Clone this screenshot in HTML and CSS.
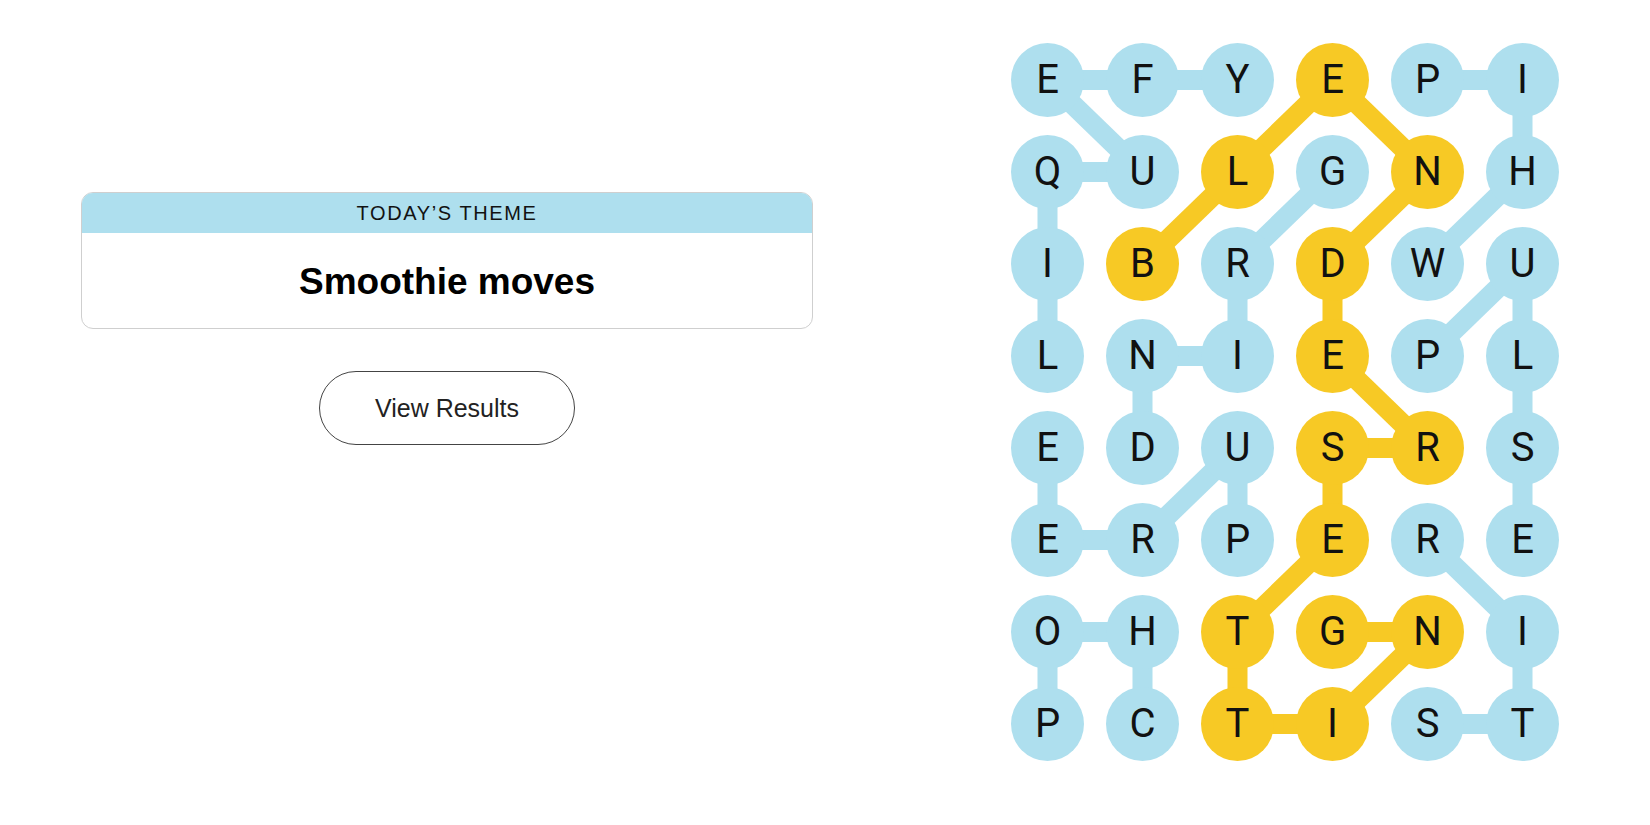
FILE: index.html
```html
<!DOCTYPE html>
<html lang="en">
<head>
<meta charset="utf-8">
<title>Strands</title>
<link rel="stylesheet" href="styles.css">
</head>
<body>
<div class="page">
  <section class="left">
    <div class="theme-card">
      <div class="theme-head">TODAY’S THEME</div>
      <div class="theme-body">Smoothie moves</div>
    </div>
    <button class="results-btn" type="button">View Results</button>
  </section>
  <section class="right">
    <div class="board">
      <svg class="links" width="570" height="736" viewBox="0 0 570 736" aria-hidden="true">
        <g class="blue-links">
          <!-- LIQUEFY -->
          <line x1="47.5" y1="322" x2="47.5" y2="230"/>
          <line x1="47.5" y1="230" x2="47.5" y2="138"/>
          <line x1="47.5" y1="138" x2="142.5" y2="138"/>
          <line x1="142.5" y1="138" x2="47.5" y2="46"/>
          <line x1="47.5" y1="46" x2="142.5" y2="46"/>
          <line x1="142.5" y1="46" x2="237.5" y2="46"/>
          <!-- WHIP -->
          <line x1="427.5" y1="230" x2="522.5" y2="138"/>
          <line x1="522.5" y1="138" x2="522.5" y2="46"/>
          <line x1="522.5" y1="46" x2="427.5" y2="46"/>
          <!-- GRIND -->
          <line x1="332.5" y1="138" x2="237.5" y2="230"/>
          <line x1="237.5" y1="230" x2="237.5" y2="322"/>
          <line x1="237.5" y1="322" x2="142.5" y2="322"/>
          <line x1="142.5" y1="322" x2="142.5" y2="414"/>
          <!-- PULSE -->
          <line x1="427.5" y1="322" x2="522.5" y2="230"/>
          <line x1="522.5" y1="230" x2="522.5" y2="322"/>
          <line x1="522.5" y1="322" x2="522.5" y2="414"/>
          <line x1="522.5" y1="414" x2="522.5" y2="506"/>
          <!-- PUREE -->
          <line x1="237.5" y1="506" x2="237.5" y2="414"/>
          <line x1="237.5" y1="414" x2="142.5" y2="506"/>
          <line x1="142.5" y1="506" x2="47.5" y2="506"/>
          <line x1="47.5" y1="506" x2="47.5" y2="414"/>
          <!-- CHOP -->
          <line x1="142.5" y1="690" x2="142.5" y2="598"/>
          <line x1="142.5" y1="598" x2="47.5" y2="598"/>
          <line x1="47.5" y1="598" x2="47.5" y2="690"/>
          <!-- STIR -->
          <line x1="427.5" y1="690" x2="522.5" y2="690"/>
          <line x1="522.5" y1="690" x2="522.5" y2="598"/>
          <line x1="522.5" y1="598" x2="427.5" y2="506"/>
        </g>
        <g class="gold-links">
          <line x1="142.5" y1="230" x2="237.5" y2="138"/>
          <line x1="237.5" y1="138" x2="332.5" y2="46"/>
          <line x1="332.5" y1="46" x2="427.5" y2="138"/>
          <line x1="427.5" y1="138" x2="332.5" y2="230"/>
          <line x1="332.5" y1="230" x2="332.5" y2="322"/>
          <line x1="332.5" y1="322" x2="427.5" y2="414"/>
          <line x1="427.5" y1="414" x2="332.5" y2="414"/>
          <line x1="332.5" y1="414" x2="332.5" y2="506"/>
          <line x1="332.5" y1="506" x2="237.5" y2="598"/>
          <line x1="237.5" y1="598" x2="237.5" y2="690"/>
          <line x1="237.5" y1="690" x2="332.5" y2="690"/>
          <line x1="332.5" y1="690" x2="427.5" y2="598"/>
          <line x1="427.5" y1="598" x2="332.5" y2="598"/>
        </g>
      </svg>
      <div class="grid">
        <div class="cell"><span class="dot">E</span></div>
        <div class="cell"><span class="dot">F</span></div>
        <div class="cell"><span class="dot">Y</span></div>
        <div class="cell"><span class="dot gold">E</span></div>
        <div class="cell"><span class="dot">P</span></div>
        <div class="cell"><span class="dot">I</span></div>

        <div class="cell"><span class="dot">Q</span></div>
        <div class="cell"><span class="dot">U</span></div>
        <div class="cell"><span class="dot gold">L</span></div>
        <div class="cell"><span class="dot">G</span></div>
        <div class="cell"><span class="dot gold">N</span></div>
        <div class="cell"><span class="dot">H</span></div>

        <div class="cell"><span class="dot">I</span></div>
        <div class="cell"><span class="dot gold">B</span></div>
        <div class="cell"><span class="dot">R</span></div>
        <div class="cell"><span class="dot gold">D</span></div>
        <div class="cell"><span class="dot">W</span></div>
        <div class="cell"><span class="dot">U</span></div>

        <div class="cell"><span class="dot">L</span></div>
        <div class="cell"><span class="dot">N</span></div>
        <div class="cell"><span class="dot">I</span></div>
        <div class="cell"><span class="dot gold">E</span></div>
        <div class="cell"><span class="dot">P</span></div>
        <div class="cell"><span class="dot">L</span></div>

        <div class="cell"><span class="dot">E</span></div>
        <div class="cell"><span class="dot">D</span></div>
        <div class="cell"><span class="dot">U</span></div>
        <div class="cell"><span class="dot gold">S</span></div>
        <div class="cell"><span class="dot gold">R</span></div>
        <div class="cell"><span class="dot">S</span></div>

        <div class="cell"><span class="dot">E</span></div>
        <div class="cell"><span class="dot">R</span></div>
        <div class="cell"><span class="dot">P</span></div>
        <div class="cell"><span class="dot gold">E</span></div>
        <div class="cell"><span class="dot">R</span></div>
        <div class="cell"><span class="dot">E</span></div>

        <div class="cell"><span class="dot">O</span></div>
        <div class="cell"><span class="dot">H</span></div>
        <div class="cell"><span class="dot gold">T</span></div>
        <div class="cell"><span class="dot gold">G</span></div>
        <div class="cell"><span class="dot gold">N</span></div>
        <div class="cell"><span class="dot">I</span></div>

        <div class="cell"><span class="dot">P</span></div>
        <div class="cell"><span class="dot">C</span></div>
        <div class="cell"><span class="dot gold">T</span></div>
        <div class="cell"><span class="dot gold">I</span></div>
        <div class="cell"><span class="dot">S</span></div>
        <div class="cell"><span class="dot">T</span></div>
      </div>
    </div>
  </section>
</div>
</body>
</html>
```

FILE: styles.css
```css
html, body {
  margin: 0;
  padding: 0;
  background: #ffffff;
}

body {
  font-family: "Liberation Sans", Arial, sans-serif;
  color: #121212;
}

.page {
  display: flex;
  width: 1650px;
  height: 825px;
}

.left {
  width: 894px;
  padding-top: 192px;
  display: flex;
  flex-direction: column;
  align-items: center;
}

.theme-card {
  width: 732px;
  box-sizing: border-box;
  border: 1px solid #cfcfcf;
  border-radius: 12px;
  overflow: hidden;
  display: flex;
  flex-direction: column;
}

.theme-head {
  height: 40px;
  background: #aedfee;
  display: flex;
  align-items: center;
  justify-content: center;
  font-size: 20px;
  letter-spacing: 1.6px;
  color: #121212;
}

.theme-body {
  height: 95px;
  display: flex;
  align-items: center;
  justify-content: center;
  font-size: 37px;
  font-weight: 700;
  color: #000;
  padding-top: 2px;
  box-sizing: border-box;
}

.results-btn {
  margin-top: 42px;
  width: 256px;
  height: 74px;
  box-sizing: border-box;
  border: 1px solid #444;
  border-radius: 37px;
  background: #fff;
  font-family: "Liberation Sans", Arial, sans-serif;
  font-size: 25px;
  color: #222;
  padding: 0;
}

.right {
  margin-left: 106px;
  padding-top: 34px;
}

.board {
  position: relative;
  width: 570px;
  height: 736px;
}

.links {
  position: absolute;
  left: 0;
  top: 0;
}

.links line {
  stroke-width: 20;
  stroke-linecap: butt;
}

.blue-links line {
  stroke: #aedfee;
}

.gold-links line {
  stroke: #f7c925;
}

.grid {
  position: relative;
  display: grid;
  grid-template-columns: repeat(6, 95px);
  grid-template-rows: repeat(8, 92px);
}

.cell {
  display: flex;
  align-items: center;
  justify-content: center;
}

.dot {
  width: 73px;
  height: 74px;
  border-radius: 50%;
  background: #aedfee;
  display: flex;
  align-items: center;
  justify-content: center;
  font-family: Roboto, "Liberation Sans", sans-serif;
  font-size: 40px;
  font-weight: 400;
  color: #111;
  line-height: 1;
}

.dot.gold {
  background: #f7c925;
}
```
